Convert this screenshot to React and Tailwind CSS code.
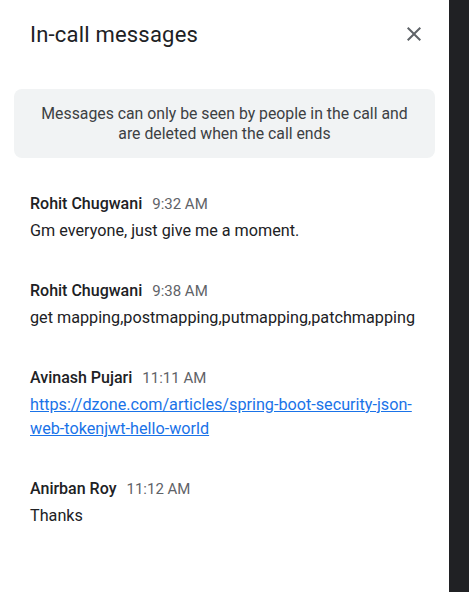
const messages = [
  { name: 'Rohit Chugwani', time: '9:32 AM', text: 'Gm everyone, just give me a moment.' },
  { name: 'Rohit Chugwani', time: '9:38 AM', text: 'get mapping,postmapping,putmapping,patchmapping' },
  {
    name: 'Avinash Pujari',
    time: '11:11 AM',
    link: 'https://dzone.com/articles/spring-boot-security-json-web-tokenjwt-hello-world',
  },
  { name: 'Anirban Roy', time: '11:12 AM', text: 'Thanks' },
];

const App = () => {
  return (
    <div className="flex w-[469px] h-[592px] bg-[#202124] font-['Roboto',_'Liberation_Sans',_sans-serif]">
      <aside className="w-[449px] h-full bg-white flex flex-col">
        {/* Header */}
        <header className="h-[68px] flex items-center justify-between pl-[30px] pr-[23px]">
          <h1 className="text-[22px] text-[#202124] tracking-[0.2px]">In-call messages</h1>
          <button className="w-6 h-6 flex items-center justify-center text-[#5f6368]">
            <svg viewBox="0 0 24 24" className="w-6 h-6" fill="currentColor">
              <path d="M19 6.41 17.59 5 12 10.59 6.41 5 5 6.41 10.59 12 5 17.59 6.41 19 12 13.41 17.59 19 19 17.59 13.41 12z" />
            </svg>
          </button>
        </header>

        {/* Notice */}
        <div className="mx-[14px] mt-[21px] h-[69px] rounded-lg bg-[#f1f3f4] flex items-center justify-center px-6">
          <p className="text-center text-[15.8px] leading-[20px] text-[#3c4043]">
            Messages can only be seen by people in the call and are deleted when the call ends
          </p>
        </div>

        {/* Messages */}
        <div className="flex flex-col gap-[35px] pl-[30px] pr-[30px] pt-[33px]">
          {messages.map((m, i) => (
            <div key={i} className="flex flex-col">
              <div className="flex items-baseline gap-[10px] h-[28px] pt-[1px]">
                <span className="text-[16px] font-medium text-[#202124]">{m.name}</span>
                <span className="text-[15px] text-[#5f6368]">{m.time}</span>
              </div>
              {m.link ? (
                <a href="#" className="text-[16.2px] leading-[24px] text-[#1a73e8] underline break-all">
                  {m.link}
                </a>
              ) : (
                <p className="text-[16.2px] leading-[24px] text-[#202124]">{m.text}</p>
              )}
            </div>
          ))}
        </div>
      </aside>
    </div>
  );
};

export default App;
